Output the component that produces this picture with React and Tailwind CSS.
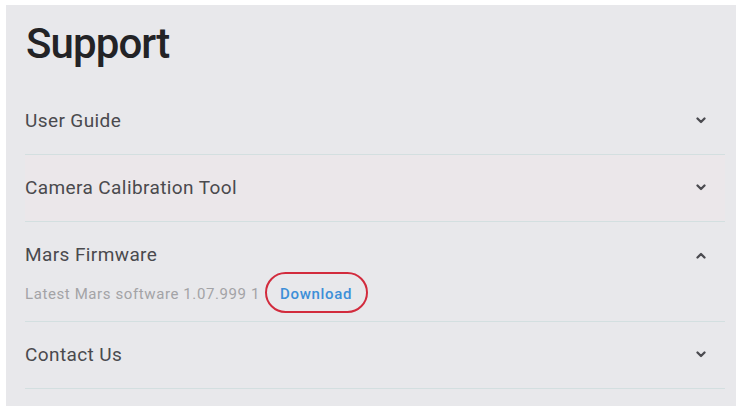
import { useState } from 'react';

const items = [
  { id: 'guide', title: 'User Guide' },
  { id: 'calibration', title: 'Camera Calibration Tool', tint: true },
  { id: 'firmware', title: 'Mars Firmware', open: true },
  { id: 'contact', title: 'Contact Us' },
];

function Chevron({ up }) {
  return (
    <svg width="12" height="8" viewBox="0 0 12 8" className="shrink-0">
      <polyline
        points={up ? '2.5,6.5 6,3 9.5,6.5' : '2.5,1.5 6,5 9.5,1.5'}
        fill="none"
        stroke="#4b4b50"
        strokeWidth="2.3"
        strokeLinecap="round"
        strokeLinejoin="round"
      />
    </svg>
  );
}

function FirmwareBody() {
  return (
    <div className="mt-[18px] flex items-center h-[18px] text-[15px] tracking-[0.6px] text-[#a3a3a6]">
      <span>Latest Mars software 1.07.999 1</span>
      <span className="relative ml-[20px] font-medium tracking-[0.7px] text-[#3d8fd8]">
        Download
        {/* highlight ring around the link */}
        <span className="absolute -left-[15px] -right-[16px] -top-[11px] -bottom-[8px] rounded-full border-[2.5px] border-[#d22b3d]" />
      </span>
    </div>
  );
}

function AccordionItem({ item, open, onToggle }) {
  return (
    <div className={`border-b border-[#d3dfe0] ${item.tint ? 'bg-[#ebe7ea]' : ''}`}>
      <button
        onClick={onToggle}
        className={`w-full flex items-center justify-between text-left ${open ? 'pt-[21px]' : 'h-[66px]'}`}
      >
        <span className="text-[19px] leading-[24px] tracking-[0.4px] text-[#4a4a4e]">{item.title}</span>
        <span className="w-[24px] flex justify-center mr-[12px]">
          <Chevron up={open} />
        </span>
      </button>
      {open && (
        <div className="pb-[18px]">
          <FirmwareBody />
        </div>
      )}
    </div>
  );
}

export default function App() {
  const [openId, setOpenId] = useState('firmware');

  return (
    <div className="w-[746px] h-[406px] bg-white overflow-hidden pt-[5px] pl-[6px] pr-[10px] font-['Roboto',sans-serif]">
      <div className="h-[420px] bg-[#e8e8eb] pl-[19px] pr-[11px]">
        <h1 className="h-[83px] pt-[16px] pl-[1px] text-[42px] leading-[46px] font-medium tracking-[-0.9px] text-[#232326]">
          Support
        </h1>
        <div>
          {items.map((item) => (
            <AccordionItem
              key={item.id}
              item={item}
              open={openId === item.id}
              onToggle={() => setOpenId(openId === item.id ? null : item.id)}
            />
          ))}
        </div>
      </div>
    </div>
  );
}
